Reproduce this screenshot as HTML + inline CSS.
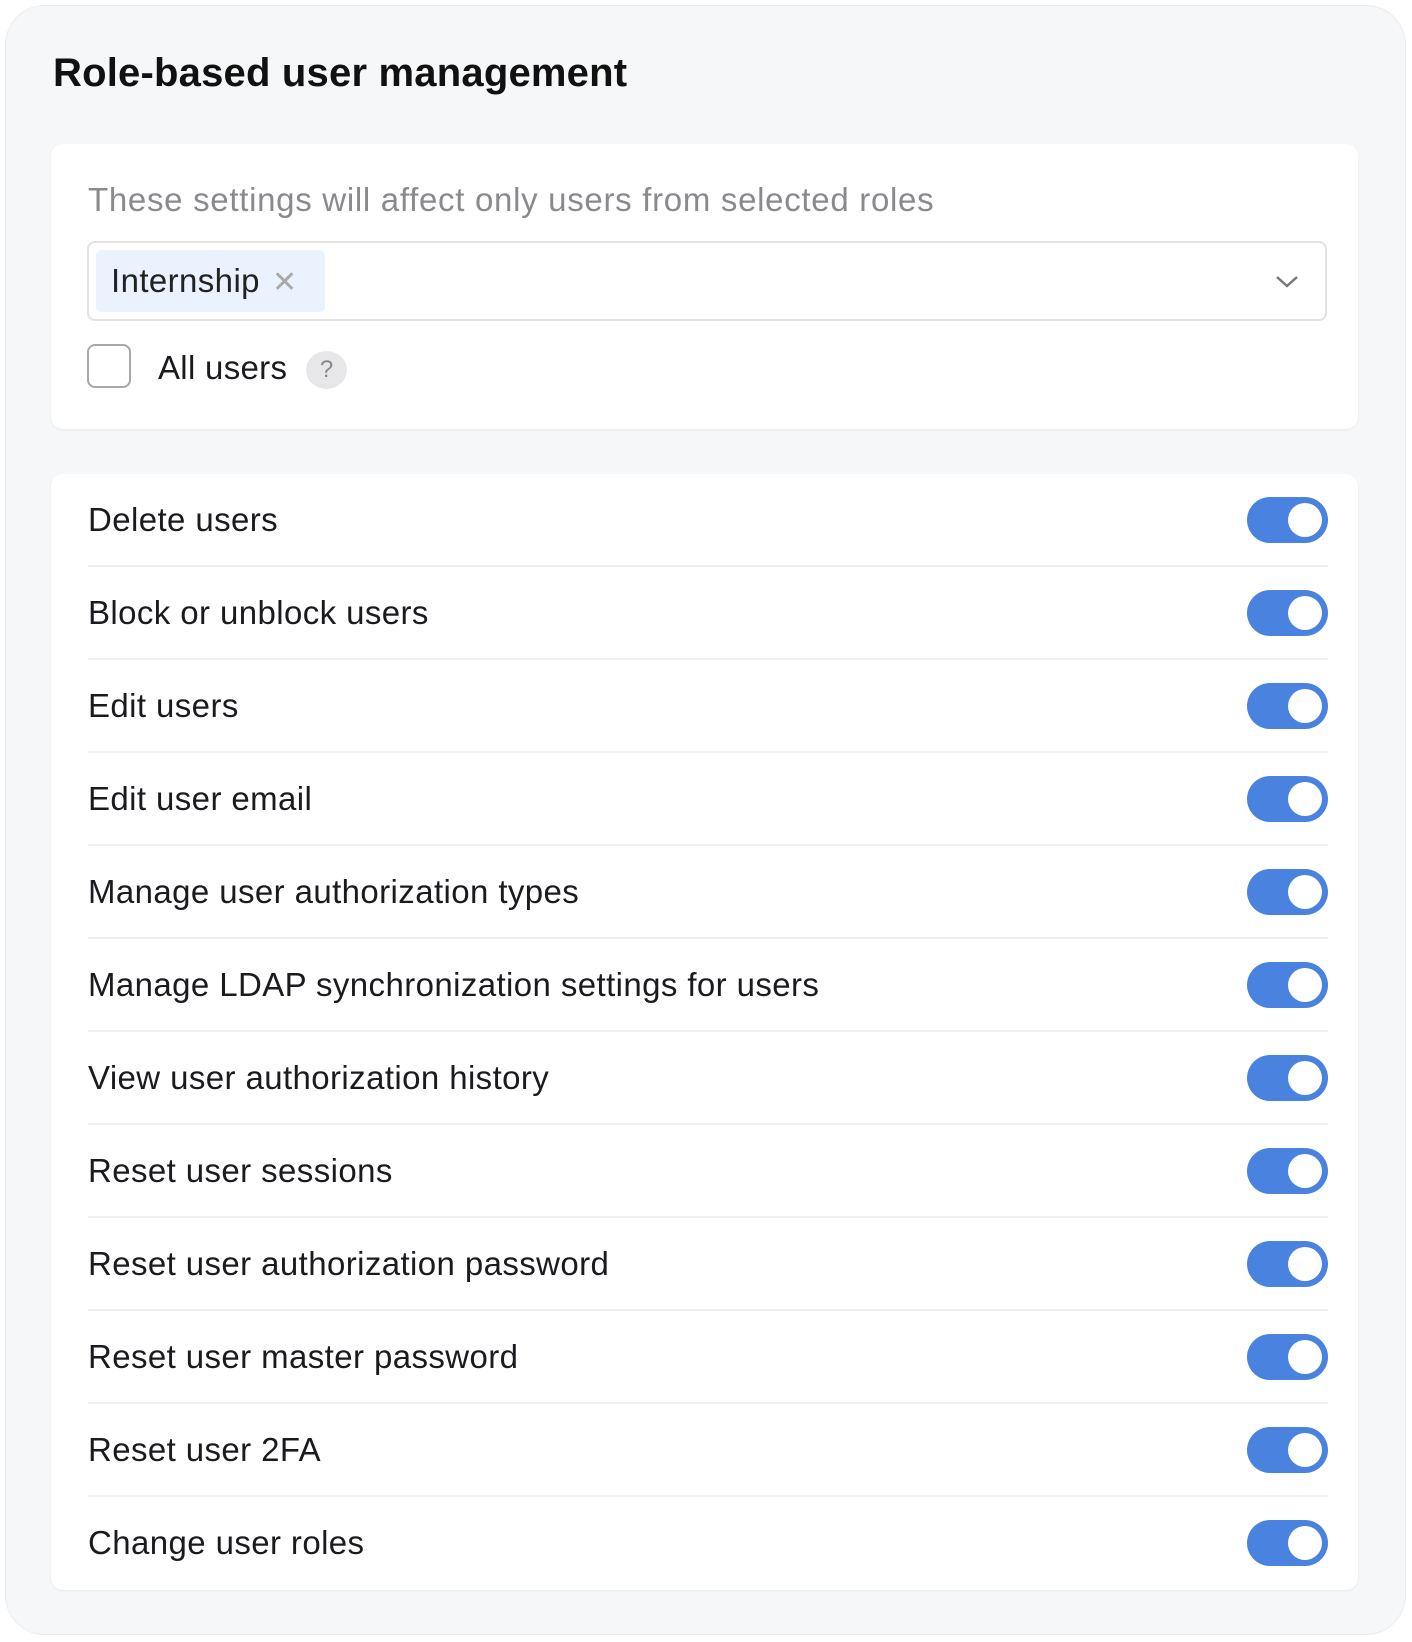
<!DOCTYPE html>
<html><head><meta charset="utf-8"><style>
*{box-sizing:border-box;margin:0;padding:0}
body{width:1412px;height:1642px;background:#fff;font-family:"Liberation Sans",sans-serif;color:#1b1b1f;position:relative;overflow:hidden}
.outer{position:absolute;left:5px;top:5px;width:1401px;height:1630px;background:#f6f7f9;border:1px solid #ececef;border-radius:40px}
h1{position:absolute;left:53px;top:51px;font-size:40px;font-weight:bold;letter-spacing:0.2px;color:#111}
.card{position:absolute;left:51px;width:1307px;background:#fff;border-radius:12px;box-shadow:0 1px 2px rgba(0,0,0,0.06)}
.sub{position:absolute;left:37px;top:37px;font-size:33px;letter-spacing:0.7px;color:#8a8a8e}
.sel{position:absolute;left:36px;top:97px;width:1240px;height:80px;border:2px solid #e3e3e6;border-radius:8px}
.tag{position:absolute;left:7px;top:7px;width:229px;height:62px;background:#eaf2fd;border-radius:6px;font-size:33px;letter-spacing:0.4px;line-height:62px;padding-left:15px;color:#222}
.tag span{color:#aaa;margin-left:12px;font-size:30px}
.cb{position:absolute;left:36px;top:200px;width:44px;height:44px;border:2px solid #a8a8ab;border-radius:8px}
.au{position:absolute;left:107px;top:205px;font-size:33px;letter-spacing:0.3px}
.q{position:absolute;left:255px;top:207px;width:41px;height:38px;border-radius:50%;background:#e7e7e9;color:#888;font-size:24px;text-align:center;line-height:38px}
.row{position:absolute;left:37px;width:1240px;height:93px;border-bottom:2px solid #f0f0f2}
.row .t{position:absolute;left:0;top:27px;font-size:33px;letter-spacing:0.4px;color:#1b1b1f}
.tg{position:absolute;right:0;top:23px;width:81px;height:46px;background:#4a82e0;border-radius:23px}
.tg::after{content:"";position:absolute;right:6px;top:6px;width:34px;height:34px;border-radius:50%;background:#fff}
</style></head><body>
<div class="outer"></div>
<h1>Role-based user management</h1>
<div class="card" style="top:144px;height:285px">
<div class="sub">These settings will affect only users from selected roles</div>
<div class="sel"><div class="tag">Internship<span>✕</span></div>
<svg style="position:absolute;left:1186px;top:31px" width="24" height="16" viewBox="0 0 24 16"><path d="M2 3l10 9 10-9" fill="none" stroke="#777" stroke-width="2.5"/></svg></div>
<div class="cb"></div><div class="au">All users</div><div class="q">?</div>
</div>
<div class="card" style="top:474px;height:1116px">
<div class="row" style="top:0"><div class="t">Delete users</div><div class="tg"></div></div>
<div class="row" style="top:93px"><div class="t">Block or unblock users</div><div class="tg"></div></div>
<div class="row" style="top:186px"><div class="t">Edit users</div><div class="tg"></div></div>
<div class="row" style="top:279px"><div class="t">Edit user email</div><div class="tg"></div></div>
<div class="row" style="top:372px"><div class="t">Manage user authorization types</div><div class="tg"></div></div>
<div class="row" style="top:465px"><div class="t">Manage LDAP synchronization settings for users</div><div class="tg"></div></div>
<div class="row" style="top:558px"><div class="t">View user authorization history</div><div class="tg"></div></div>
<div class="row" style="top:651px"><div class="t">Reset user sessions</div><div class="tg"></div></div>
<div class="row" style="top:744px"><div class="t">Reset user authorization password</div><div class="tg"></div></div>
<div class="row" style="top:837px"><div class="t">Reset user master password</div><div class="tg"></div></div>
<div class="row" style="top:930px"><div class="t">Reset user 2FA</div><div class="tg"></div></div>
<div class="row" style="top:1023px;border-bottom:none"><div class="t">Change user roles</div><div class="tg"></div></div>
</div>
</body></html>
